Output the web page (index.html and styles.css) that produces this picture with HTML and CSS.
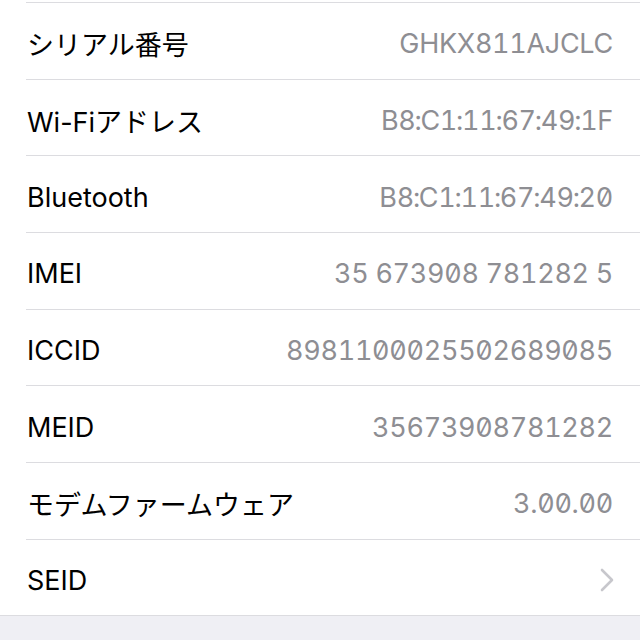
FILE: index.html
```html
<!DOCTYPE html>
<html lang="ja">
<head>
  <meta charset="UTF-8" />
  <meta name="viewport" content="width=device-width, initial-scale=1.0" />
  <title>情報</title>
  <link rel="stylesheet" href="styles.css">
</head>
<body>

<ul class="info-list">
  <li class="info-row">
    <span class="label">シリアル番号</span>
    <span class="value">GHKX811AJCLC</span>
  </li>
  <li class="info-row">
    <span class="label">Wi-Fiアドレス</span>
    <span class="value">B8<i class="colon">:</i>C1<i class="colon">:</i>11<i class="colon">:</i>67<i class="colon">:</i>49<i class="colon">:</i>1F</span>
  </li>
  <li class="info-row">
    <span class="label">Bluetooth</span>
    <span class="value">B8<i class="colon">:</i>C1<i class="colon">:</i>11<i class="colon">:</i>67<i class="colon">:</i>49<i class="colon">:</i>20</span>
  </li>
  <li class="info-row">
    <span class="label">IMEI</span>
    <span class="value">35 673908 781282 5</span>
  </li>
  <li class="info-row">
    <span class="label">ICCID</span>
    <span class="value">8981100025502689085</span>
  </li>
  <li class="info-row">
    <span class="label">MEID</span>
    <span class="value">35673908781282</span>
  </li>
  <li class="info-row">
    <span class="label">モデムファームウェア</span>
    <span class="value">3.00.00</span>
  </li>
  <li class="info-row last">
    <span class="label">SEID</span>
    <svg class="chevron" width="14" height="24" viewBox="0 0 14 24">
      <polyline points="2,2 12,12 2,22" fill="none" stroke="#c7c7cc" stroke-width="2.6" stroke-linecap="round" stroke-linejoin="round" />
    </svg>
  </li>
</ul>

</body>
</html>
```

FILE: styles.css
```css
html, body {
  margin: 0;
  padding: 0;
  background: #efeff4;
}
body {
  font-family: Inter, "Noto Sans CJK JP", sans-serif;
  -webkit-font-smoothing: antialiased;
}
.info-list {
  list-style: none;
  margin: 0;
  padding: 2px 0 0 26px;
  background: #fff;
  border-bottom: 1px solid #dcdce0;
}
.info-row {
  display: flex;
  align-items: center;
  justify-content: space-between;
  box-sizing: border-box;
  height: 76.67px;
  border-top: 1px solid #dcdce0;
  padding: 6px 27px 0 1px;
}
.label {
  font-size: 27px;
  color: #000;
}
.value {
  font-size: 27px;
  color: #8e8e93;
  font-feature-settings: "tnum", "zero";
  letter-spacing: -0.3px;
}
.colon {
  font-style: normal;
  margin: 0 -1px;
}
.chevron {
  display: block;
  margin-right: -1px;
}
```
